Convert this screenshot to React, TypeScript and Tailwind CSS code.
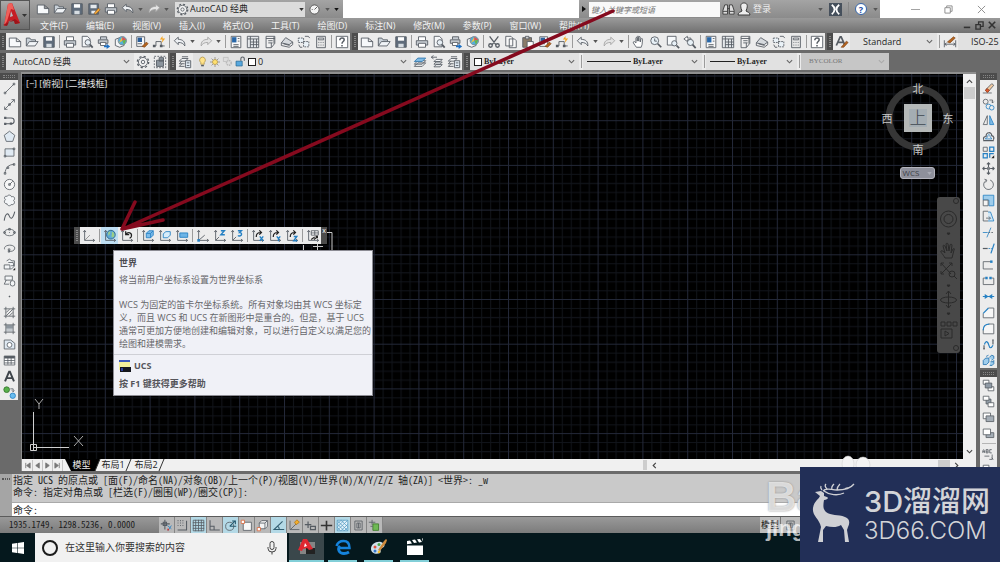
import type { ReactNode } from "react";

const DARK = "#565c63";
const BLUE = "#2580c3";
const PALE = "#dfe9f2";

const axes = <path d="M3 2v11h11M1.500 3.500 3 1.500l1.500 2M12.500 11.500l2 1.500-2 1.500" />;
const turn = <path d="M6 9c0-4 2-5 5-5M9.500 1.500 12 4 9.500 6.500" stroke="#222" strokeWidth="1.400" />;

const icons: Record<string, ReactNode> = {
  new: <path d="M1.500 3.500h8l5 4v6h-13zM9.500 3.500v4h5" fill="#f7f9fb" />,
  open: (
    <>
      <path d="M1.500 12.500v-9h4l1.500 2h5v2" fill="#c9d1d8" />
      <path d="M1.500 12.500 5 7.500h10l-3.500 5z" fill="#f1f4f7" />
    </>
  ),
  save: (
    <>
      <path d="M2 2h12v12H2z" fill="#5f6c7b" />
      <path d="M4.500 2.500h7v4h-7z" fill="#fff" stroke="none" />
      <path d="M5 10h6v4H5z" fill="#d7dde2" stroke="none" />
    </>
  ),
  saveAs: (
    <>
      <path d="M2 2h11v12H2z" fill="#5f6c7b" />
      <path d="M4 3h7v4H4zM5 10h5v3H5z" fill="#e6eaee" stroke="none" />
      <path d="m8 13 5-6 2 2-5 5z" fill="#f0a63a" stroke="#8d5a20" strokeWidth=".7" />
    </>
  ),
  print: (
    <>
      <path d="M4 6V2h8v4" fill="#fff" />
      <path d="M1.500 6.500h13v5h-13z" fill="#c4cad0" />
      <path d="M4 9.500h8v4.500H4z" fill="#fff" />
    </>
  ),
  preview: (
    <>
      <path d="M2.500 1.500h6l3 3v9h-9z" fill="#f4f6f8" />
      <circle cx="9" cy="8.500" r="3.200" fill="#e8f0f6" />
      <path d="m11.500 11 3 3.500" strokeWidth="2" />
    </>
  ),
  publish: (
    <>
      <path d="M4 5V2h7v3M1.500 5.500h11v4h-11z" fill="#c4cad0" />
      <path d="M4 8.500h6V12H4z" fill="#fff" />
      <path d="M8 12h3v-2l4 3-4 3v-2H8z" fill="#1c6fc4" stroke="none" />
    </>
  ),
  web: (
    <>
      <path d="m1.500 5 5-2 5 2v7l-5 2-5-2z" fill="#f4f6f8" />
      <circle cx="9.500" cy="6.500" r="4.800" fill="#54b0dc" stroke="#7d8790" />
      <path d="M9.500 2v4.500L5.500 9z" fill="#f3c13e" stroke="none" />
      <path d="M9.500 2v4.500L14 5z" fill="#e4524a" stroke="none" />
      <path d="M9.500 6.500 14 5.500 11.500 11z" fill="#69b54b" stroke="none" />
    </>
  ),
  match: (
    <>
      <path d="M2 2h9v11H2z" fill="#f8f8f8" />
      <path d="M3 3h5v5H3z" fill="#2a5e9a" stroke="none" />
      <path d="M3 10h5" />
      <path d="m8 13 5-5 2 2-4 4z" fill="#b4641f" stroke="#7b4216" strokeWidth=".7" />
    </>
  ),
  block: (
    <>
      <path d="M1.500 12.500h3v-5h6v5h4" />
      <path d="M1 11h3v3H1zM9 11h3v3H9z" fill={DARK} stroke="none" />
      <path d="m12 1-3 4h3l-1 4 4-5h-3z" fill="#f5a623" stroke="none" />
    </>
  ),
  undo: <path d="M1.500 6.500 6 2.500v2.500c5 0 8 2.500 7.500 7.500C12 9.500 9.500 8.500 6 8.500V11z" fill="#eef1f4" />,
  redo: <path d="M14.500 6.500 10 2.500v2.500c-5 0-8 2.500-7.500 7.500C4 9.500 6.500 8.500 10 8.500V11z" fill="#e4e4e4" stroke="#a3a3a3" />,
  props: (
    <>
      <path d="M2.500 1.500h11v13h-11z" fill="#f8f8f8" />
      <path d="M3.500 2.500h5v6h-5z" fill="#2867a8" stroke="none" />
      <path d="M10 4h2M10 7h2M5 11h6M5 13h6" />
    </>
  ),
  design: (
    <>
      <path d="M1.500 1.500h13v13h-13z" fill="#e6e9ec" />
      <path d="M1.500 4.500h13M5 1.500v13M8.500 4.500v10M12 4.500v10M5 8h9.500M5 11h9.500" />
    </>
  ),
  palette: (
    <>
      <path d="M3.500 1.500h10v8l-4 5h-6z" fill="#f1f1f1" />
      <path d="M3.500 4h10M6 6.500h5M6 9h5M9.500 14v-5M12.500 2v8" />
    </>
  ),
  sheet: (
    <>
      <path d="m1.500 9 5-6 8 5-4 3z" fill="#d6dade" />
      <path d="M1.500 9v3l9 2 4-3V8M4 10l7 2" fill="none" />
    </>
  ),
  markup: (
    <>
      <path d="M1.500 3.500h6v5h-6zM7.500 7.500h6v6h-6z" fill="#eaf2f8" strokeDasharray="2 1" />
      <path d="M9 1.500h4l1.500 2M2 11l1.500 3H6" />
    </>
  ),
  calc: (
    <>
      <path d="M3 1.500h10v13H3z" fill="#e8e8e8" />
      <path d="M5 3.500h6v2H5z" fill="#fff" />
      <path d="M5 8.500h1M7.500 8.500h1M10 8.500h1M5 11.500h1M7.500 11.500h1M10 11.500h1" />
    </>
  ),
  cut: <path d="m3 1.500 7.500 10M13 1.500 5.500 11.500M2 12a2 2 0 1 0 4 0 2 2 0 1 0-4 0M10 12a2 2 0 1 0 4 0 2 2 0 1 0-4 0" strokeWidth="1.500" />,
  copy: <path d="M2 1.500h6l2 2v9H2zM6 4.500h6l2 2v8H6z" fill="#f8f8f8" />,
  paste: (
    <>
      <path d="M2 3h10v11H2z" fill="#8a7b68" />
      <path d="M5 1.500h4v3H5z" fill="#ccc" />
      <path d="M7 7.500h7v7H7z" fill="#fff" />
    </>
  ),
  hand: <path d="M5 14C3 11 1 9 1.500 8s2-.5 3 1V3.500c0-1 1.500-1 1.500 0V7 2c0-1 1.700-1 1.700 0v5V2.500c0-1 1.700-1 1.700 0V8l1-3.500c.3-1 1.800-.6 1.600.5L11.500 11c-.2 1.500-1 2-1 3z" fill="#fff" />,
  zoom: (
    <>
      <circle cx="6.500" cy="6.500" r="4.500" fill="#e8f1f7" />
      <path d="M6.500 4v3h2.500" />
      <path d="m10 10 4 4" strokeWidth="2" />
    </>
  ),
  zoomWin: (
    <>
      <path d="M1.500 1.500h10v10h-10z" fill="#f6f9fb" />
      <circle cx="9.500" cy="9.500" r="3" fill="#e8f1f7" />
      <path d="m12 12 3 3" strokeWidth="2" />
    </>
  ),
  zoomPrev: (
    <>
      <path d="M1 4.500 5 1.500v2h4v2H5v2z" fill="#fff" />
      <circle cx="8.500" cy="8.500" r="3.500" fill="#e8f1f7" />
      <path d="m11 11 3.500 4" strokeWidth="2" />
    </>
  ),
  textStyle: (
    <>
      <path d="m1.500 12 4.500-10h1l4 9M3 8.500h6" strokeWidth="2" />
      <path d="m7 14 6-7 2 1.500-5 5.500z" fill="#b4641f" stroke="#7b4216" strokeWidth=".7" />
    </>
  ),
  dimStyle: (
    <>
      <path d="M1.500 6v8M14.500 6v8M2 10.500h12M4 9l-2 1.500L4 12M12 9l2 1.500L12 12" />
      <path d="m5 8 7-6 2 1.500-6 5.500z" fill="#b4641f" stroke="#7b4216" strokeWidth=".7" />
    </>
  ),
  gear: (
    <>
      <circle cx="8" cy="8" r="6.500" strokeDasharray="2.500 2.600" strokeWidth="1.500" />
      <circle cx="8" cy="8" r="5.200" fill="#f2f2f2" />
      <circle cx="8" cy="8" r="2" />
    </>
  ),
  workspace: (
    <>
      <path d="M1.500 1.500h13v13h-13z" strokeDasharray="2 1.500" />
      <path d="M4 6h8v7H4zM7 3h5v4H7z" fill="#8b949d" />
    </>
  ),
  layers: (
    <>
      <path d="m1.500 7 3-3h7l-3 3zM1.500 10l3-3M1.500 10h6M1.500 13h6M1.500 13l3-3" fill="#f3f5f7" />
      <path d="M8.500 6.500h6v8h-6zM10 9h3M10 12h3" fill="#dfe9f2" />
      <path d="M4.500 2h7" />
    </>
  ),
  layersBlue: (
    <>
      <path d="m1.500 13 4-4h9l-4 4zM1.500 10.500l4-4h9l-4 4z" fill="#f3f5f7" />
      <path d="m1.500 7.500 4-4h9l-4 4z" fill="#7fbbe6" stroke="#3278ad" />
    </>
  ),
  layersBack: (
    <>
      <path d="m4.500 13.500 2.500-2.500h7l-2.500 2.500zM4.500 10.500 7 8h7l-2.500 2.500zM4.500 7.500 7 5h7l-2.500 2.500z" fill="#f3f5f7" />
      <path d="M8 2.500H1.500M4 .500l-2.500 2 2.500 2" />
    </>
  ),
  bulb: (
    <>
      <path d="M8 1.500a4.500 4.500 0 0 0-2.500 8V12h5V9.500a4.500 4.500 0 0 0-2.500-8z" fill="#ffe38a" stroke="#a88b3c" />
      <path d="M6 14h4" strokeWidth="2" />
    </>
  ),
  sun: (
    <>
      <path d="M8 0v16M0 8h16M2.500 2.500l11 11M13.500 2.500l-11 11" stroke="#77706a" />
      <circle cx="8" cy="8" r="4" fill="#ffe070" stroke="#a88b3c" />
    </>
  ),
  freeze: (
    <>
      <path d="M2 2h7v6H2z" fill="#ddd" stroke="#b8b8b8" />
      <circle cx="10" cy="10" r="3.500" fill="#ddd" stroke="#b8b8b8" strokeDasharray="2 1" strokeWidth="2" />
    </>
  ),
  lock: (
    <>
      <path d="M1.500 7.500h9v7h-9z" fill="#58a8de" stroke="#22658f" />
      <path d="M8.500 7V4a2.500 2.500 0 0 1 5 0v3" strokeWidth="1.500" />
    </>
  ),
  help: (
    <>
      <path d="M1.500 1.500h13v13h-13z" fill="#fff" />
      <path d="M5.500 6c0-3.500 5-3 5-.5C10.500 7.500 8 7.500 8 10M8 11.500v1.500" strokeWidth="1.700" />
    </>
  ),
  // draw toolbar
  line: <path d="M2.500 13.500 13.500 2.500M1.500 12.500h2v2h-2zM12.500 1.500h2v2h-2z" />,
  xline: <path d="M2 14 14 2M2 10.500V14h3.500M14 5.500V2h-3.500M7 7h2v2H7z" />,
  pline: <path d="M3 5h7c5 0 5 7 0 7H3M2 4h1.500v1.500H2zM2 11.500h1.500v1.500H2zM9 11h1.500v1.500H9z" strokeWidth="1.300" />,
  polygon: <path d="m8 1.500 6.500 5L12 14H4L1.500 6.500z" fill={PALE} />,
  rect: <path d="M2.500 3.500h11v9h-11zM1.500 11.500h2v2h-2zM12.500 2.500h2v2h-2z" fill={PALE} />,
  arc: <path d="M2.500 14C3 7 7 3 13.500 3M1.500 13h2v2h-2zM5 6h2v2H5zM12.500 2h2v2h-2z" />,
  circle: (
    <>
      <circle cx="8" cy="8" r="6.300" fill="#f7f7f7" />
      <path d="m8 8 4-4M7 7h2v2H7z" />
    </>
  ),
  cloud: <path d="M5 3c1-2.500 5-2 5.500.5C14 2 15.500 6 13 8c2.500 2 .500 6-3 5-1 2.500-5 1.500-5-1-3 .5-4.500-3-2-5C.500 4.500 2.500 2 5 3z" fill="#f3f5f7" />,
  spline: <path d="M1.500 13C3 4 6 3 7.500 7s4 6 7-5" strokeWidth="1.300" />,
  ellipse: <path d="M1.500 8a6.500 4 0 1 0 13 0 6.500 4 0 1 0-13 0M7 3h2v2H7zM1 7h2v2H1zM13 7h2v2h-2zM7.500 8h1" />,
  earc: <path d="M2 9C0 3 14 2 14.500 7.500 14.500 11 10 12 7.500 11.500M6.500 8.500h2v2h-2zM6.500 11h1.500v1.500H6.500z" />,
  insert: (
    <>
      <path d="M4.500 3.500 8 1.500l3 2h3v6h-4M1.500 8.500h7v5h-7zM6.500 5.500h6l1 5-3 3h-2" fill="#f3f5f7" />
      <path d="M15 12v3h-3z" fill="#222" stroke="none" />
    </>
  ),
  makeBlock: <path d="M2.500 2.500h9v5h-9zM4 7.500l-2.500 5h6M9 11.500a2.800 2.800 0 1 0 5.500 0 2.800 2.800 0 1 0-5.500 0" fill="#f3f5f7" />,
  point: <path d="M7.500 7.500h1v1h-1z" fill={DARK} />,
  hatch: <path d="M3.500 1v14M12.500 1v14M1 3.500h14M1 12.500h14M4 8l4-4M4 12l8-8M8 12l4-4" fill="none" />,
  gradient: (
    <>
      <path d="M4 4h8v8H4z" fill="#c3c9ce" stroke="none" />
      <path d="M4 4h8v4H4z" fill="#8d969e" stroke="none" />
      <path d="M3.500 1v14M12.500 1v14M1 3.500h14M1 12.500h14" />
    </>
  ),
  region: (
    <>
      <path d="M1.500 2.500h8l5 4v7h-13z" fill={PALE} />
      <circle cx="8" cy="8.500" r="3" fill="#fff" />
    </>
  ),
  table: (
    <>
      <path d="M1.500 2.500h13v11h-13z" fill="#fff" />
      <path d="M1.500 4h13" strokeWidth="3" />
      <path d="M1.500 8h13M1.500 11h13M6 5v8M10 5v8" />
    </>
  ),
  mtext: <path d="M2.500 14 7.500 2h1l5 12M4.500 10h7" strokeWidth="2.400" stroke="#3f454b" />,
  addSel: (
    <>
      <circle cx="4.500" cy="4.500" r="3.500" fill="#58b14b" stroke="#35732e" />
      <circle cx="12" cy="12" r="3.300" fill="#69bdf0" stroke={BLUE} />
      <path d="M9 3.500h3.500V7M11 5.500 12.500 7 14 5.500" />
    </>
  ),
  // modify toolbar
  erase: (
    <>
      <path d="M1 13.500h11" />
      <path d="m5 9 7-7 2.500 2-6.500 7.500z" fill="#f0c9a0" />
      <path d="m4 10 2.500-2 2.500 2.500L6.500 13z" fill="#e0582b" stroke="#8d3a1a" />
    </>
  ),
  mcopy: (
    <>
      <circle cx="4.500" cy="4.500" r="3" />
      <circle cx="8" cy="10.500" r="3" stroke={BLUE} />
      <circle cx="12" cy="12" r="2.800" stroke={BLUE} fill="#ececec" />
      <path d="M9 2.500h4V6M11.500 4.500 13 6l1.500-1.500" />
    </>
  ),
  mirror: (
    <>
      <path d="M6.500 2v11H1.500z" fill="#eee" />
      <path d="M9.500 2v11h5z" fill="#7fbbe6" stroke={BLUE} />
    </>
  ),
  offset: (
    <>
      <path d="M1.500 13h13M2 12c-1-4 2-4 3-4 0-6 7-6 7-1 3 1 3 3 2 5" strokeWidth="1.500" />
      <path d="M4 11c1-2 3-1 3-3 0-3 3-3 3 0l2 3z" stroke={BLUE} />
    </>
  ),
  array: (
    <>
      <path d="M1.500 1.500h5v5h-5z" />
      <path d="M9.500 1.500h5v5h-5zM1.500 9.500h5v5h-5zM9.500 14.500v-5h5" stroke={BLUE} strokeWidth="1.500" />
      <path d="M15 11.500V15h-3.500z" fill="#222" stroke="none" />
    </>
  ),
  move: <path d="M8 1v5M8 10v5M1 8h5M10 8h5M6 3l2-2 2 2M6 13l2 2 2-2M3 6 1 8l2 2M13 6l2 2-2 2M7 7h2v2H7z" strokeWidth="1.300" />,
  rotate: <path d="M10 2.500A6 6 0 1 1 5 3M3 1.500l3 1-1.500 3" />,
  scale: (
    <>
      <path d="M1.500 1.500h13v13h-6v-7h-7z" fill="#9fcdec" stroke={BLUE} />
      <path d="M1.500 7.500h6v7h-6z" fill="#f3f3f3" />
    </>
  ),
  stretch: (
    <>
      <path d="M7.500 2.500h3l4 11h-7" fill="#cfe6f6" stroke={BLUE} />
      <path d="M7.500 1.500h-6v12h6M5 10h5M8.500 8l2 2-2 2" />
    </>
  ),
  trim: (
    <>
      <path d="M1 8h6M11 2 6 14" stroke={BLUE} />
      <path d="M8 8h7" strokeDasharray="2 1.500" />
    </>
  ),
  extend: (
    <>
      <path d="M1 8h6" strokeWidth="1.500" />
      <path d="M8 8h4" strokeDasharray="2 1" stroke={BLUE} />
      <path d="m15 2-4 12" stroke={BLUE} strokeWidth="1.500" />
    </>
  ),
  breakPt: (
    <>
      <path d="M11 4.500H1.500v9h12" />
      <path d="M10 3h3v3h-3z" fill={BLUE} stroke="none" />
    </>
  ),
  breakAt: (
    <>
      <path d="M4 5H1.500v8h13V5H12" />
      <path d="M4 3.500h3v3H4zM9 3.500h3v3H9z" fill={BLUE} stroke="none" />
    </>
  ),
  join: <path d="M1 8h14M4 6l3 2-3 2zM12 6 9 8l3 2z" stroke={BLUE} strokeWidth="1.300" />,
  chamfer: (
    <>
      <path d="M8 2.500h6.500v12h-13V9" fill="#f6f6f6" />
      <path d="m1.500 9 6.500-6.500" stroke={BLUE} strokeWidth="1.500" />
    </>
  ),
  fillet: (
    <>
      <path d="M8 2.500h6.500v12h-13V9" fill="#f6f6f6" />
      <path d="M1.500 10c0-5 3-7.500 7.500-7.500" stroke={BLUE} strokeWidth="1.500" />
    </>
  ),
  blend: (
    <>
      <path d="M2.500 14V9M13.500 2v6M1.500 13h2M12.500 2.500h2" strokeWidth="1.400" />
      <path d="M3 8c2-6 4.500-3 5.500 1s3 4 5 0" stroke={BLUE} strokeWidth="1.500" />
    </>
  ),
  explode: <path d="m1.500 8 3-3h4v5l-3 3h-4zM9 4l3-2.500 2.500 1v3L12 8M10.500 9.500h3l1-1.500v4l-2 2h-3M5 3l3-1.500" fill="#9fcdec" stroke="#1f6fae" />,
  order1: (
    <>
      <path d="M1.500 1.500h7v5h-7zM7.500 9.500h7v5h-7z" fill="#fff" />
      <path d="M4 5h8v6H4z" fill="#8f9aa5" />
    </>
  ),
  order2: (
    <>
      <path d="M5 5h6v6H5z" fill="#8f9aa5" />
      <path d="M1.500 1.500h7v5h-7zM7.500 9.500h7v5h-7z" fill="#fff" />
    </>
  ),
  order3: (
    <>
      <path d="M1.500 2.500h9v7h-9z" fill="#fff" />
      <path d="M5 6h9.500v7H5z" fill="#a4adb6" />
    </>
  ),
  order4: (
    <>
      <path d="M5 7h9.500v6H5z" fill="#a4adb6" />
      <path d="M1.500 2.500h9v7h-9z" fill="#fff" />
    </>
  ),
  abc: <path d="M1 6V3.500l1-1.500 1 1.500V6M1 4.500h2M5 2v4h2.500V2H5M5 4h2M12 2H9.500v4H12M9 10H3M12.500 8v6M9 14h4M12 12l2 2" />,
  // user coordinate system toolbar
  ucs: <>{axes}<path d="m3 13 6-6" stroke="#8a8a8a" /></>,
  ucsWorld: (
    <>
      {axes}
      <circle cx="9" cy="6.500" r="5" fill="#5fa9d6" stroke="#2b6688" />
      <path d="M6 4c2-2 3-1 2 1s-1 1-2 3zM10 3c2 0 3 2 3 4s-2 3-3 2 1-3 0-6z" fill="#9bcf86" stroke="none" />
    </>
  ),
  ucsPrev: <>{axes}<path d="M6.500 6.500c3-4 7.500-2 6.500 2-.5 1-1 1.500-2 2M6.500 2.500v4h4" stroke="#222" strokeWidth="1.400" /></>,
  ucsFace: <>{axes}<path d="m6 5 3-3h5v5l-3 3H6zM6 5h5v5M11 5l3-3" fill="#7dbcea" stroke={BLUE} /></>,
  ucsObject: <>{axes}<path d="M6 10V5.500L9 3h5v4l-3 3z" fill="#d8ecfa" stroke={BLUE} /></>,
  ucsView: <>{axes}<path d="M5.500 4.500h9v5h-9z" fill="#6db4e6" stroke={BLUE} /></>,
  ucsOrigin: <>{axes}<path d="m3 13 7-6" /><path d="M1.500 11.500h3v3h-3z" fill={BLUE} stroke="none" /></>,
  ucsZ: <>{axes}<path d="m3 13 4-4" /><path d="M9 2h4L9 6.500h4.500" stroke={BLUE} strokeWidth="1.600" /></>,
  ucs3: <>{axes}<path d="m3 13 4-4" /><path d="M9 2h4l-2 2c3 0 3 4-.5 4-1 0-1.500-.5-1.500-.5" stroke={BLUE} strokeWidth="1.600" /></>,
  ucsRotX: <>{axes}{turn}<path d="m10 8.500 4 5M14 8.500l-4 5" stroke={BLUE} strokeWidth="1.600" /></>,
  ucsRotY: <>{axes}{turn}<path d="m10 8.500 2 2.500 2-2.500M12 11v3" stroke={BLUE} strokeWidth="1.600" /></>,
  ucsRotZ: <>{axes}{turn}<path d="M10 8.500h3.500l-3.500 5h4" stroke={BLUE} strokeWidth="1.600" /></>,
  ucsApply: <>{axes}<path d="M6 2h8v5H6zM10 2v5M6 4.500h8" fill="#fff" /><path d="m6 12 4-3M9 12l4-3M11 8.500h2v2" stroke="#222" strokeWidth="1.400" /></>,
  // status bar
  infer: <><path d="M6 1v12M1 6h11M4 4h4v4H4z" strokeWidth="1.300" /><path d="M9 8l5 4M10 14l4-6" stroke={BLUE} /><path d="M9 13h2" stroke="#c33" strokeWidth="2" /></>,
  snap: <path d="M2 2h1M5 2h1M8 2h1M2 5h1M5 5h1M8 5h1M2 8h1M5 8h1M8 8h1M2 13.500h11V2" strokeWidth="1.300" />,
  grid: <path d="M1.500 1.500h13v13h-13zM4.500 1v14M8 1v14M11.500 1v14M1 4.500h14M1 8h14M1 11.500h14" />,
  ortho: <path d="M2.500 1.500v12h12M2.500 9h5v4" strokeWidth="1.300" />,
  polar: <><circle cx="7" cy="9" r="5" /><path d="m7 9 7-7M7 9h8M10 2.500h4v4" stroke="#24586e" strokeWidth="1.300" /></>,
  osnap: <><path d="M4 4h10v10H4z" fill="#f8f8f8" /><path d="M1.500 1.500h4v4h-4z" stroke="#d9663a" fill="#fff" /></>,
  osnap3d: <><path d="m4 5 3-3h7v7l-3 3H4zM4 5h7v7M11 5l3-3" fill="#f4f4f4" /><path d="M1.500 10.500h4v4h-4z" stroke="#d9663a" fill="#fff" /></>,
  otrack: <path d="M13 3 2.500 13H15M7 9c2 1 2 3 2 4" strokeWidth="1.300" stroke="#315d70" />,
  ducs: <><path d="M2.500 2v11H14M3 13 12 4" /><path d="m11 1 3 3-4 3-2-3z" fill="#f2ae2e" stroke="#b87a18" /></>,
  dyn: <path d="M5 3v8M1 7h8M8 9h6v4H8z" strokeWidth="1.500" />,
  lwt: <path d="M8 2v12M1 8h14" strokeWidth="2" stroke="#333" />,
  tpy: <path d="M1.500 1.500h13v13h-13zM1.500 6l5-4.500M1.500 10 10 1.500M1.500 14l13-12.500M6 14.500l8.500-8M10 14.500l4.500-4M1.500 10l4 4.500M1.500 6 10 14.500M1.500 2l13 12.500M6 1.500l8.500 8" fill="#e5f4fb" stroke="#5b9fc4" />,
  qp: <path d="M3.500 2.500h9v11h-9zM6 5h4v6H6zM8 5v6" />,
  cycle: <><path d="M6 6h7v8H6z" fill="#6fb955" stroke="#3b7a28" /><path d="M1 4h8M5 1v6M3 9h3" /></>,
};

function Icon({ name, size = "size-[14px]" }: { name: string; size?: string }) {
  return (
    <svg viewBox="0 0 16 16" className={`${size} shrink-0`} fill="none" stroke={DARK} strokeWidth="1">
      {icons[name]}
    </svg>
  );
}

function Down({ color = "#333" }: { color?: string }) {
  return (
    <svg viewBox="0 0 6 4" className="w-[5px] h-[3px] shrink-0">
      <path d="M0 0h6L3 4z" fill={color} />
    </svg>
  );
}

function Chevron({ color = "#444", className = "" }: { color?: string; className?: string }) {
  return (
    <svg viewBox="0 0 8 8" className={`size-[7px] shrink-0 ${className}`} fill="none" stroke={color} strokeWidth="1.300">
      <path d="m1 2.500 3 3 3-3" />
    </svg>
  );
}

function Grip() {
  return (
    <div className="w-[6px] self-stretch bg-[#4c4c4c] px-[2px] py-[3px] shrink-0">
      <div className="h-full border-x border-dotted border-[#858585]" />
    </div>
  );
}

function GripTop() {
  return (
    <div className="h-[7px] bg-[#4c4c4c] px-[3px] py-[2px] shrink-0">
      <div className="h-full border-y border-dotted border-[#858585]" />
    </div>
  );
}

// "|" is a separator and "v" a drop arrow, everything else is an icon name
function Tools({ items, active }: { items: string[]; active?: string }) {
  return (
    <>
      {items.map((item, i) => {
        if (item === "|") return <div key={i} className="w-px h-[13px] ml-[2px] mr-px bg-[#9b9b9b] shrink-0" />;
        if (item === "v")
          return (
            <button key={i} aria-label="更多" className="w-[9px] h-full flex items-center justify-center shrink-0">
              <Down color="#555" />
            </button>
          );
        return (
          <button
            key={i}
            aria-label={item}
            className={`w-[17px] h-full flex items-center justify-center shrink-0 ${item === active ? "bg-[#bfdff3]" : ""}`}
          >
            <Icon name={item} />
          </button>
        );
      })}
    </>
  );
}

function SideTools({ items }: { items: string[] }) {
  return (
    <div className="bg-[#ececec] flex flex-col items-center">
      {items.map((item, i) =>
        item === "|" ? (
          <div key={i} className="h-px w-[14px] my-[2px] bg-[#b5b5b5] shrink-0" />
        ) : (
          <button key={i} aria-label={item} className="h-[16px] w-full flex items-center justify-center shrink-0">
            <Icon name={item} size="size-[13px]" />
          </button>
        )
      )}
    </div>
  );
}

interface ComboProps {
  label: string;
  value: string;
  className: string;
  text?: string;
  disabled?: boolean;
  children?: ReactNode;
}

function Combo({ label, value, className, text = "", disabled, children }: ComboProps) {
  return (
    <div className={`h-full flex items-center shrink-0 gap-[2px] px-1 ${disabled ? "bg-[#c6c6c6]" : "bg-[#e1e1e1]"} ${className}`}>
      {children}
      <select
        aria-label={label}
        disabled={disabled}
        className={`appearance-none bg-transparent flex-1 min-w-0 outline-none ${text}`}
      >
        <option>{value}</option>
      </select>
      <Chevron color={disabled ? "#aaa" : "#666"} />
    </div>
  );
}

const standard = ["new", "open", "save", "|", "print", "preview", "publish", "web", "|"];
const palettes = ["props", "design", "palette", "sheet", "markup", "calc", "|", "help"];
const drawTools = [
  "line", "xline", "pline", "polygon", "rect", "arc", "circle", "cloud", "spline", "ellipse",
  "earc", "insert", "makeBlock", "point", "hatch", "gradient", "region", "table", "mtext", "addSel",
];
const modifyTools = [
  "erase", "mcopy", "mirror", "offset", "array", "move", "rotate", "scale", "stretch",
  "trim", "extend", "breakPt", "breakAt", "join", "chamfer", "fillet", "blend", "explode",
];
const ucsTools = [
  "ucs", "|", "ucsWorld", "ucsPrev", "|", "ucsFace", "ucsObject", "ucsView", "|",
  "ucsOrigin", "ucsZ", "ucs3", "|", "ucsRotX", "ucsRotY", "ucsRotZ", "|", "ucsApply",
];
const menus = [
  "文件(F)", "编辑(E)", "视图(V)", "插入(I)", "格式(O)", "工具(T)",
  "绘图(D)", "标注(N)", "修改(M)", "参数(P)", "窗口(W)", "帮助(H)",
];
const statusTools = [
  "infer", "snap", "grid", "ortho", "polar", "osnap", "osnap3d",
  "otrack", "ducs", "dyn", "lwt", "tpy", "qp", "cycle",
];
const statusOn = ["grid", "polar", "otrack", "tpy"];

const UI = "font-['Open_Sans','Noto_Sans_CJK_SC',sans-serif]";
const MONO = "font-['Noto_Sans_Mono_CJK_SC','Liberation_Mono','Noto_Sans_CJK_SC',monospace]";
const SERIF = "font-['Liberation_Serif','Noto_Sans_CJK_SC',serif]";

function Header() {
  return (
    <header className="flex h-[33px] shrink-0 bg-[#7b7b7b]">
      <button aria-label="应用程序菜单" className="w-[30px] h-[30px] shrink-0 bg-linear-to-b from-[#aaa] to-[#6d6d6d] border border-[#555] flex items-center justify-center">
        <svg viewBox="0 0 28 28" className="size-[28px]">
          <path d="m7 3 4-1 8 20-5 1-1-4-5 1-2 4-3 1z" fill="#c51d24" />
          <path d="m7 3 4-1 2 7-3-1-4 12-3 5z" fill="#f0605a" />
          <path d="m10 10 2 5-3 1z" fill="#b9bcc0" />
          <path d="m2 24 4 1 2-4 5-1 1 3 5-1-5-4z" fill="#9c141a" />
          <path d="M21 13h5l-2.500 3z" fill="#333" />
        </svg>
      </button>
      <div className="flex-1 min-w-0 flex flex-col">
        <div className="flex h-[18px] bg-white">
          <div className="w-[313px] shrink-0 flex items-center bg-linear-to-b from-[#a4a4a4] to-[#8b8b8b] pl-1">
            <Tools items={["new", "open", "save", "saveAs", "print", "undo", "v", "redo", "v"]} />
            <div className="ml-1 h-[15px] w-[130px] bg-[#dcdcdc] flex items-center gap-px px-px shrink-0">
              <Icon name="gear" size="size-[13px]" />
              <select aria-label="工作空间" className="appearance-none flex-1 min-w-0 bg-transparent text-[9px]">
                <option>AutoCAD 经典</option>
              </select>
              <Down />
            </div>
            <div className="flex-1 flex items-center justify-between px-1">
              <svg viewBox="0 0 12 12" className="size-[11px]" stroke="#555" fill="#f4f4f4">
                <circle cx="6" cy="6" r="5" />
                <path d="m6 6 3-3M3 6h1" />
              </svg>
              <Down color="#555" />
              <Down color="#111" />
            </div>
          </div>
          <div className="flex-1" />
          <div className="w-[301px] shrink-0 flex items-center bg-linear-to-b from-[#a4a4a4] to-[#8b8b8b]">
            <button aria-label="展开" className="w-[10px] flex justify-center shrink-0">
              <svg viewBox="0 0 4 6" className="w-[4px] h-[6px]"><path d="M0 0v6l4-3z" fill="#111" /></svg>
            </button>
            <input
              aria-label="搜索"
              placeholder="键入关键字或短语"
              className="w-[131px] h-[15px] bg-[#f9f9f9] px-[2px] text-[8px] italic placeholder:text-[#777]"
            />
            <button aria-label="查找" className="w-[17px] flex justify-center">
              <svg viewBox="0 0 14 14" className="size-[13px]" fill="#ddd" stroke="#3c3c3c">
                <path d="M3 2h3v10H1V8zM11 2H8v10h5V8zM6 6h2M1 9h5M8 9h5" />
              </svg>
            </button>
            <button className="flex items-center gap-[2px] text-[9px] text-[#eee]">
              <svg viewBox="0 0 14 14" className="size-[14px]" fill="#eee" stroke="#3c3c3c">
                <path d="M1 13c0-3 3-3 4-4-3-7 0-8 2-8s5 1 2 8c1 1 4 1 4 4z" />
              </svg>
              登录
            </button>
            <div className="ml-auto mr-[2px] flex items-center gap-[6px]">
              <Down color="#555" />
              <svg viewBox="0 0 14 14" className="size-[13px]" fill="none" stroke="#fff" strokeWidth="2">
                <path d="M0 0h14v14H0z" fill="#46505c" stroke="none" />
                <path d="M3 2c4 3 4 7 0 10M11 2C7 5 7 9 11 12" />
              </svg>
              <div className="w-px h-[14px] bg-[#888]" />
              <button aria-label="帮助" className="size-[12px] rounded-full bg-white border border-[#3564a8] text-[#174da5] text-[9px] leading-none font-bold flex items-center justify-center">?</button>
              <Down color="#555" />
            </div>
          </div>
          <div className="w-[120px] shrink-0 flex items-center justify-between pl-[31px] pr-[14px]">
            <svg viewBox="0 0 10 10" className="size-[9px]" stroke="#999"><path d="M0 5h10" /></svg>
            <svg viewBox="0 0 10 10" className="size-[9px]" stroke="#888" fill="none"><path d="M1 3h6v6H1zM3 3V1h6v6H7" /></svg>
            <svg viewBox="0 0 10 10" className="size-[9px]" stroke="#888"><path d="m1 1 8 8M9 1 1 9" /></svg>
          </div>
        </div>
        <nav className="flex items-center h-[15px] bg-linear-to-b from-[#9a9a9a] to-[#707070] pl-[10px] pr-1">
          <div className="flex gap-[18px] text-[9px] leading-[15px] text-[#f2f2f2]">
            {menus.map((m) => (
              <button key={m} className="whitespace-nowrap">{m}</button>
            ))}
          </div>
          <div className="ml-auto flex gap-1 text-[#333]">
            <svg viewBox="0 0 10 10" className="size-[8px]" stroke="#333" strokeWidth="2"><path d="M1 8h8" /></svg>
            <svg viewBox="0 0 10 10" className="size-[9px]" stroke="#333" strokeWidth="1.500" fill="none"><path d="M1 4h5v5H1zM4 4V1h5v5H6" /></svg>
            <svg viewBox="0 0 10 10" className="size-[8px]" stroke="#333" strokeWidth="2"><path d="m1 1 8 8M9 1 1 9" /></svg>
          </div>
        </nav>
      </div>
    </header>
  );
}

function Toolbars() {
  return (
    <div className="shrink-0 flex flex-col gap-[3px] pb-[2px]">
      <div className="flex h-[17px] gap-[2px]">
        <div className="flex items-center bg-[#ececec] shrink-0">
          <Grip />
          <Tools items={[...standard, "match", "block", "|", "undo", "v", "redo", "v", "|", ...palettes]} />
        </div>
        <div className="flex items-center bg-[#ececec] shrink-0">
          <Grip />
          <Tools
            items={[
              ...standard, "cut", "copy", "paste", "match", "block", "|", "undo", "v", "redo", "v", "|",
              "hand", "zoom", "zoomWin", "zoomPrev", "|", ...palettes,
            ]}
          />
        </div>
        <div className="flex items-center bg-[#ececec] flex-1 min-w-0 overflow-hidden">
          <Grip />
          <Tools items={["textStyle"]} />
          <Combo label="文字样式" value="Standard" className="w-[87px] pl-[13px]" text="text-[9px]" />
          <Tools items={["|", "dimStyle"]} />
          <Combo label="标注样式" value="ISO-25" className="w-[100px] pl-[13px]" text="text-[9px]" />
        </div>
      </div>
      <div className="flex h-[17px] gap-[2px]">
        <div className="flex items-center bg-[#ececec] shrink-0">
          <Grip />
          <Combo label="工作空间" value="AutoCAD 经典" className="w-[128px] pl-[7px]" text="text-[9px]" />
          <Tools items={["gear", "workspace"]} />
        </div>
        <div className="flex items-center bg-[#ececec] shrink-0">
          <Grip />
          <Tools items={["layers"]} />
          <Combo label="图层" value="0" className="w-[218px]" text="text-[9px]">
            <Icon name="bulb" size="size-[11px]" />
            <Icon name="sun" size="size-[10px]" />
            <Icon name="freeze" size="size-[11px]" />
            <Icon name="lock" size="size-[11px]" />
            <div className="size-[8px] border border-[#222] bg-white shrink-0" />
          </Combo>
          <Tools items={["layersBlue", "layersBack", "layers"]} />
        </div>
        <div className={`flex items-center bg-[#ececec] shrink-0 ${SERIF}`}>
          <Grip />
          <Combo label="颜色" value="ByLayer" className="w-[109px]" text="text-[8px] font-bold">
            <div className="size-[8px] border border-[#222] bg-white shrink-0" />
          </Combo>
          <Tools items={["|"]} />
          <Combo label="线型" value="ByLayer" className="w-[119px]" text="text-[8px] font-bold">
            <div className="w-[44px] h-px bg-[#222] shrink-0" />
          </Combo>
          <Tools items={["|"]} />
          <Combo label="线宽" value="ByLayer" className="w-[91px]" text="text-[8px] font-bold">
            <div className="w-[25px] h-px bg-[#222] shrink-0" />
          </Combo>
          <Tools items={["|"]} />
          <Combo label="打印样式" value="BYCOLOR" className="w-[88px] pl-2" text="text-[7px] text-[#777]" disabled />
        </div>
      </div>
    </div>
  );
}

function ViewCube() {
  return (
    <div className="absolute right-[8px] top-[4px] w-[76px] flex flex-col items-center">
      <svg viewBox="0 -4 76 80" className="w-[76px] h-[80px] text-[11px] font-['Noto_Sans_CJK_SC',sans-serif]">
        <circle cx="39" cy="36" r="29" fill="none" stroke="#363636" strokeWidth="7" />
        <path d="M25 22h28v28H25z" fill="#b4b8b8" />
        <path d="M30 27h18v18H30z" fill="#a4adb3" />
        <g textAnchor="middle" fill="#c8c8c8">
          <text x="39" y="11">北</text>
          <text x="8" y="41">西</text>
          <text x="69" y="41">东</text>
          <text x="39" y="72">南</text>
          <text x="39" y="42" fontSize="17" fontWeight="300" fill="#3f4850">上</text>
        </g>
      </svg>
      <button className="mt-[9px] w-[35px] h-[12px] rounded-[3px] bg-[#8e909b] border border-[#b5b5be] text-[#3d3f46] text-[8px] leading-none flex items-center justify-between px-[2px]">
        WCS <Down color="#a9abb5" />
      </button>
    </div>
  );
}

function NavBar() {
  return (
    <div className="absolute right-[3px] top-[123px] w-[23px] h-[156px] rounded-[3px] bg-[#484848]">
      <svg viewBox="0 0 23 156" className="w-full h-full" fill="none" stroke="#2a2a2a" strokeWidth="1">
        <circle cx="19" cy="4" r="2.500" />
        <circle cx="11.500" cy="22" r="8" />
        <circle cx="11.500" cy="22" r="4.500" />
        <path d="m10 36 1.500 2 1.500-2zM10 88l1.500 2 1.500-2zM10 116l1.500 2 1.500-2z" fill="#2a2a2a" />
        <path d="M8 61c-2-4-5-6-4-7s3 1 4 2l-2-7c0-1 1-1 2 0l2 5-1-7c0-1 2-1 2 0l1 7 1-6c0-1 2-1 2 0l-1 8 2-4c1-1 2 0 1 1l-2 8z" />
        <path d="M4 66 14 77M15 66 4 77M4 69v-3h3M12 66h3v3M4 74v3h3" />
        <circle cx="15" cy="77" r="3" />
        <path d="m17 79 3 3M11.500 94v17M9 97l2.500-3 2.500 3M9 108l2.500 3 2.500-3" />
        <ellipse cx="11.500" cy="103" rx="8" ry="3" />
        <path d="M4 125h4v4H4zM10 125h4v4h-4zM16 125h4v4h-4zM4 132h11v9H4zM8 134v5l4-2.500z" />
        <circle cx="19" cy="151" r="2.500" />
      </svg>
    </div>
  );
}

function Tooltip() {
  return (
    <div className="absolute left-[91px] top-[176px] w-[260px] bg-[#f0f1f7] border border-[#8c8c94] text-[9px] text-[#66666a]">
      <div className="px-[5px] pt-[5px] whitespace-nowrap">
        <p className="font-bold leading-[13px] text-[#4a4a50]">世界</p>
        <p className="leading-[13px] mt-1">将当前用户坐标系设置为世界坐标系</p>
        <p className="leading-[13px] mt-3 mb-[4px]">
          WCS 为固定的笛卡尔坐标系统。所有对象均由其 WCS 坐标定
          <br />
          义，而且 WCS 和 UCS 在新图形中是重合的。但是，基于 UCS
          <br />
          通常可更加方便地创建和编辑对象，可以进行自定义以满足您的
          <br />
          绘图和建模需求。
        </p>
      </div>
      <div className="border-t border-[#cfd0d6] px-[5px] pt-1 pb-[5px] font-bold text-[#55555a]">
        <p className="flex items-center gap-[3px] leading-[13px]">
          <svg viewBox="0 0 12 12" className="size-[12px]">
            <path d="M0 0h11v10H0z" fill="#f2ef9a" />
            <path d="M0 0h11v2H0z" fill="#3c58b8" />
            <path d="M1 7h11v5H1z" fill="#14161c" />
            <path d="M2 8h2v3H2z" fill="#2b3f9a" />
          </svg>
          UCS
        </p>
        <p className="leading-[13px] mt-[5px]">按 F1 键获得更多帮助</p>
      </div>
    </div>
  );
}

function Drawing() {
  return (
    <div className="relative flex-1 min-w-0 bg-black overflow-hidden">
      <svg className="absolute inset-0 w-full h-full">
        <defs>
          <pattern id="grid" x="38" y="1.500" width="44.800" height="44.700" patternUnits="userSpaceOnUse">
            <path d="M9.500 0v45M18.500 0v45M27.500 0v45M36.500 0v45M0 9.500h45M0 18.500h45M0 27.500h45M0 36.500h45" stroke="#11141a" />
            <path d="M.5 0v45M0 .5h45" stroke="#232838" />
          </pattern>
        </defs>
        <rect width="100%" height="100%" fill="url(#grid)" />
      </svg>
      <p className="absolute left-[4px] top-[3px] text-[9px] leading-[13px] text-[#e4e4e4]">[−] [俯视] [二维线框]</p>
      <svg viewBox="0 0 70 60" className="absolute left-[4px] bottom-0 w-[70px] h-[60px]" fill="none" stroke="#d0d0d0">
        <path d="M7.500 13v38M4.500 45.500h6v6h-6zM7 48.500h36" />
        <path d="m9 0 4 5 4-5M13 5v5M48 37l9 10M57 37l-9 10" stroke="#aaa" />
      </svg>
      <svg viewBox="0 0 40 24" className="absolute left-[278px] top-[156px] w-[40px] h-[24px]" fill="none" stroke="#c8c8c8">
        <path d="M25 2.500h7V22M3.500 15v7M13 16.500h10M17.500 14v8" />
      </svg>
      <ViewCube />
      <NavBar />
      <div className="absolute left-[52px] top-[153px] h-[17px] flex items-center bg-[#ececec]">
        <Grip />
        <Tools items={ucsTools} active="ucsWorld" />
        <button aria-label="关闭" className="w-[6px] self-stretch bg-[#4c4c4c] text-white text-[7px] leading-[8px] flex items-start justify-center">x</button>
      </div>
      <Tooltip />
    </div>
  );
}

const navGlyphs = ["M2 1v6M7 1 3 4l4 3z", "M6 1 2 4l4 3z", "M2 1v6l4-3z", "M6 1v6M1 1l4 3-4 3z"];

function Workspace() {
  return (
    <main className="flex-1 min-h-0 flex bg-[#6a6a6a]">
      <aside className="w-[18px] shrink-0 pt-px">
        <GripTop />
        <SideTools items={drawTools} />
      </aside>
      <section className="flex-1 min-w-0 flex flex-col ml-[3px] mr-1 border-t-2 border-l border-[#8f8f8f]">
        <div className="flex-1 min-h-0 flex">
          <Drawing />
          <div className="w-[13px] bg-[#f0f0f0] shrink-0 flex flex-col items-center py-[4px]">
            <Chevron className="rotate-180" />
            <div className="w-[11px] h-[12px] mt-[2px] bg-[#cdcdcd]" />
            <Chevron className="mt-auto" />
          </div>
        </div>
        <div className="h-[12px] bg-[#f0f0f0] flex items-center shrink-0 pl-[1px] text-[9px] leading-[12px] text-[#222]">
          {navGlyphs.map((d) => (
            <button key={d} aria-label="切换布局" className="w-[10px] h-[11px] border-r border-[#c4c4c4] flex items-center justify-center">
              <svg viewBox="0 0 8 8" className="size-[7px]" fill="#777" stroke="#777"><path d={d} /></svg>
            </button>
          ))}
          <div className="relative flex items-center ml-[2px]">
            <svg viewBox="0 0 102 12" className="w-[102px] h-[12px]" preserveAspectRatio="none">
              <path d="M0 0h35l-5 12H6z" fill="#000" />
              <path d="m30 12 5-12M61 12l5-12M94 12l5-12" stroke="#333" />
            </svg>
            <div className="absolute inset-0 flex">
              <button className="w-[33px] text-[#eee]">模型</button>
              <button className="w-[30px]">布局1</button>
              <button className="w-[36px]">布局2</button>
            </div>
          </div>
          <div className="ml-auto w-[333px] h-full flex items-center">
            <div className="w-[4px] h-[10px] bg-[#cdcdcd]" />
            <Chevron className="rotate-90 ml-[4px]" />
            <div className="ml-auto w-[12px] h-[11px] bg-[#cdcdcd]" />
            <Chevron className="-rotate-90 ml-[3px] mr-[16px]" />
          </div>
        </div>
      </section>
      <aside className="w-[17px] mr-[3px] shrink-0 pt-px overflow-hidden">
        <GripTop />
        <SideTools items={modifyTools} />
        <div className="h-[2px]" />
        <GripTop />
        <SideTools items={["order1", "order2", "order3", "order4", "|", "abc", "order1"]} />
      </aside>
    </main>
  );
}

function CommandLine() {
  return (
    <div className={`shrink-0 mt-[3px] flex text-[10px] text-[#222] ${MONO}`}>
      <div className="w-[12px] bg-[#a5a5a5] pt-1 px-[2px]">
        <div className="h-[2px] border-y border-dotted border-[#555]" />
      </div>
      <div className="flex-1 min-w-0">
        <div className="h-[29px] bg-[#c9c9c9] border-b border-[#a9a9a9] pl-px leading-[12px] whitespace-nowrap">
          <p>指定 UCS 的原点或 [面(F)/命名(NA)/对象(OB)/上一个(P)/视图(V)/世界(W)/X/Y/Z/Z 轴(ZA)] &lt;世界&gt;: _w</p>
          <p>命令: 指定对角点或 [栏选(F)/圈围(WP)/圈交(CP)]:</p>
        </div>
        <label className="h-[13px] bg-white flex items-center pl-px leading-[13px]">
          命令:
          <input className="flex-1 min-w-0 h-full bg-transparent outline-none" />
        </label>
      </div>
    </div>
  );
}

function StatusBar() {
  return (
    <div className="shrink-0 h-[17px] flex border-t border-[#5b5b5b] bg-linear-to-b from-[#999] to-[#7c7c7c]">
      <div className={`w-[159px] pl-[9px] text-[9px] leading-[16px] text-[#1c1c1c] whitespace-pre ${MONO}`}>1935.1749, 1298.5236, 0.0000</div>
      {statusTools.map((t) => (
        <button
          key={t}
          aria-label={t}
          className={`w-[16px] border-r border-[#858585] flex items-center justify-center ${statusOn.includes(t) ? "bg-[#b4d9e6]" : "bg-[#b9b9b9]"}`}
        >
          <Icon name={t} size="size-[13px]" />
        </button>
      ))}
      <div className="ml-auto w-[240px] flex text-[9px] leading-[16px] text-[#222]">
        <button className="w-[21px] bg-[#bdbdbd] border-r border-[#777]">模型</button>
        <button aria-label="布局" className="w-[19px] bg-[#bdbdbd] flex items-center justify-center"><Icon name="qp" size="size-[13px]" /></button>
      </div>
    </div>
  );
}

function Taskbar() {
  return (
    <footer className="shrink-0 h-[29px] flex bg-[#05181d]">
      <button aria-label="开始" className="w-[35px] flex items-center justify-center">
        <svg viewBox="0 0 12 12" className="size-[12px]" fill="#fff">
          <path d="M0 1.700 5 1v4.700H0zM5.600.9 12 0v5.700H5.600zM0 6.300h5V11l-5-.7zM5.600 6.300H12V12l-6.400-.9z" />
        </svg>
      </button>
      <div className="w-[252px] bg-[#f1f1f1] flex items-center pl-[7px] pr-[10px] gap-[7px]">
        <div className="size-[16px] rounded-full border-2 border-[#1b1b1b] shrink-0" />
        <input
          aria-label="搜索"
          placeholder="在这里输入你要搜索的内容"
          className="flex-1 min-w-0 bg-transparent text-[10px] placeholder:text-[#333]"
        />
        <svg viewBox="0 0 10 14" className="w-[10px] h-[14px]" fill="none" stroke="#444">
          <path d="M3 2.500a2 2 0 0 1 4 0v4a2 2 0 0 1-4 0zM1 6v1.500a4 3.500 0 0 0 8 0V6M5 11v2.500" />
        </svg>
      </div>
      <button aria-label="AutoCAD" className="w-[35px] ml-[2px] bg-[#3a474b] border-b-2 border-[#82cfd8] flex items-center justify-center">
        <svg viewBox="0 0 18 16" className="w-[18px] h-[16px]">
          <path d="M2 3h15v12H2z" fill="#858585" />
          <path d="M8 9h9v6H8z" fill="#222" />
          <path d="M5 0h4l6 10-4 1-2-2-4 1-1 2-4-1z" fill="#df2730" />
          <path d="m7 4 2 3-3 1z" fill="#fff" />
        </svg>
      </button>
      <button aria-label="Edge" className="w-[29px] ml-1 border-b-2 border-[#82cfd8] flex items-center justify-center">
        <svg viewBox="0 0 16 16" className="size-[16px]" fill="none">
          <path d="M3 9h11.500C14.500 4 12 2 8.500 2 5 2 2.500 4 1.500 7" stroke="#1583dc" strokeWidth="2.500" />
          <path d="M5 7c-3 3-1 7.500 4 7.500 2 0 3.500-.5 5-1.500" stroke="#1583dc" strokeWidth="2.800" />
        </svg>
      </button>
      <button aria-label="画图" className="w-[29px] ml-[7px] border-b-2 border-[#82cfd8] flex items-center justify-center">
        <svg viewBox="0 0 18 18" className="size-[18px]">
          <path d="M1 11c0-5 5-8 10-7 5 2 4 5 1 6s0 3-2 5C6 17 1 15 1 11z" fill="#cfe0ea" />
          <circle cx="5" cy="9" r="1.500" fill="#e0503c" />
          <circle cx="9" cy="6.500" r="1.500" fill="#4aa74a" />
          <circle cx="5" cy="13" r="1.500" fill="#3678cc" />
          <circle cx="9" cy="14" r="1.300" fill="#f0bd34" />
          <path d="m8 12 6-9 2-2 1 1-1 3-6 8z" fill="#d08a3c" />
        </svg>
      </button>
      <button aria-label="视频编辑" className="w-[29px] ml-[7px] border-b-2 border-[#82cfd8] flex items-center justify-center">
        <svg viewBox="0 0 18 18" className="size-[18px]" fill="#fff">
          <path d="M1 7.500h16V17H1zM1 3l3-.5 2 3-5 .7zM6 2l3-.4 2 3-3 .4zM11 1.300l3-.3 2 3-3 .4zM16 .5h1v3z" />
        </svg>
      </button>
    </footer>
  );
}

function Watermarks() {
  return (
    <>
      <svg viewBox="0 0 32 16" className="absolute right-[128px] bottom-[91px] w-[32px] h-[16px]">
        <ellipse cx="8" cy="9" rx="6" ry="8" fill="#f4f4f4" stroke="#ccc" strokeWidth=".5" />
        <ellipse cx="23" cy="10" rx="7" ry="8" fill="#f4f4f4" stroke="#ccc" strokeWidth=".5" />
      </svg>
      <div className="absolute right-[200px] bottom-[21px] w-[34px] text-white/70 font-bold font-['Liberation_Sans',sans-serif]">
        <p className="text-[42px] leading-[40px] [text-shadow:0_0_2px_#888]">Ba</p>
        <p className="text-[22px] leading-[24px]">jing</p>
      </div>
      <div className="absolute right-0 bottom-0 w-[200px] h-[95px] bg-[#222f57] text-[#d3d4d8] flex items-center pl-[12px] gap-[8px] whitespace-nowrap">
        <svg viewBox="0 0 44 60" className="w-[44px] h-[60px] shrink-0 mb-1">
          <path
            d="M3 9c3 0 3-1 6-1l3 2v3c2 1 4 1 4 2s-3 2-4 2c-1 6-1 9 2 12 5 4 12 2 19 5 5 2 5 6 3 10l-1 3 2 12h-4l-1-12-3-5c-5 3-10 2-15 1l-3 4v12H6l3-15c-2-9-9-11-8-19 1-7 6-9 7-12z"
            fill="#cfd0d4"
          />
          <g fill="none" stroke="#cfd0d4" strokeWidth="1.300">
            <path d="M11 8c3-4 8-1 14-1 7 0 13-1 17-6M12 8c5 4 14 5 20 2M15 6c-2-2-2-4-1-5M20 6c-1-2 1-4 2-5M25 7c0-3 1-4 3-6M33 6c1-1 3-1 5-2M10 7C8 5 9 3 9 3" />
          </g>
        </svg>
        <div className="font-['Inter','Noto_Sans_CJK_SC',sans-serif]">
          <p className="text-[29px] leading-[33px] font-medium">3D溜溜网</p>
          <p className="text-[24px] leading-[26px] font-light">3D66.COM</p>
        </div>
      </div>
    </>
  );
}

export default function App() {
  return (
    <div className={`relative h-screen flex flex-col overflow-hidden bg-[#6a6a6a] text-[#1f1f1f] ${UI}`}>
      <Header />
      <Toolbars />
      <Workspace />
      <CommandLine />
      <StatusBar />
      <Taskbar />
      <Watermarks />
      <svg viewBox="0 0 640 240" className="absolute left-0 top-0 w-[640px] h-[240px] pointer-events-none" fill="none" stroke="#850a1e" strokeWidth="3.500" strokeLinecap="round">
        <path d="M613 11 123 229M135 202l-13 27M163 220l-41 9" />
      </svg>
    </div>
  );
}
